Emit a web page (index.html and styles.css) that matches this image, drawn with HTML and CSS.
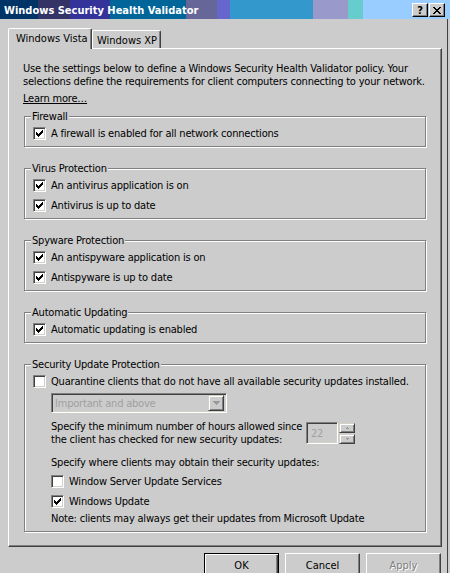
FILE: index.html
```html
<!DOCTYPE html>
<html>
<head>
<meta charset="utf-8">
<title>Windows Security Health Validator</title>
<link rel="stylesheet" href="styles.css">
</head>
<body>
<div class="window">
  <div class="titlebar">
    <span class="title">Windows Security Health Validator</span>
    <div class="tbtns">
      <span class="tbtn help">?</span>
      <span class="tbtn close"><svg width="8" height="7" viewBox="0 0 8 7" shape-rendering="crispEdges"><path d="M0 0h2v1h-2zM6 0h2v1h-2zM1 1h2v1h-2zM5 1h2v1h-2zM2 2h4v1h-4zM3 3h2v1h-2zM2 4h4v1h-4zM1 5h2v1h-2zM5 5h2v1h-2zM0 6h2v1h-2zM6 6h2v1h-2z" fill="#000"/></svg></span>
    </div>
  </div>
  <div class="client">
    <div class="tabs">
      <div class="tab active">Windows Vista</div>
      <div class="tab inactive">Windows XP</div>
    </div>
    <div class="panel">
      <p class="intro">Use the settings below to define a Windows Security Health Validator policy. Your<br>selections define the requirements for client computers connecting to your network.</p>
      <div class="learn"><a>Learn more…</a></div>

      <fieldset class="group">
        <legend>Firewall</legend>
        <div class="row"><span class="cb"><svg width="7" height="7" viewBox="0 0 7 7" shape-rendering="crispEdges"><path d="M6 0h1v3h-1zM5 1h1v3h-1zM4 2h1v3h-1zM3 3h1v3h-1zM2 4h1v3h-1zM1 3h1v3h-1zM0 2h1v3h-1z" fill="#000"/></svg></span><span>A firewall is enabled for all network connections</span></div>
      </fieldset>

      <fieldset class="group">
        <legend>Virus Protection</legend>
        <div class="row"><span class="cb"><svg width="7" height="7" viewBox="0 0 7 7" shape-rendering="crispEdges"><path d="M6 0h1v3h-1zM5 1h1v3h-1zM4 2h1v3h-1zM3 3h1v3h-1zM2 4h1v3h-1zM1 3h1v3h-1zM0 2h1v3h-1z" fill="#000"/></svg></span><span>An antivirus application is on</span></div>
        <div class="row"><span class="cb"><svg width="7" height="7" viewBox="0 0 7 7" shape-rendering="crispEdges"><path d="M6 0h1v3h-1zM5 1h1v3h-1zM4 2h1v3h-1zM3 3h1v3h-1zM2 4h1v3h-1zM1 3h1v3h-1zM0 2h1v3h-1z" fill="#000"/></svg></span><span>Antivirus is up to date</span></div>
      </fieldset>

      <fieldset class="group">
        <legend>Spyware Protection</legend>
        <div class="row"><span class="cb"><svg width="7" height="7" viewBox="0 0 7 7" shape-rendering="crispEdges"><path d="M6 0h1v3h-1zM5 1h1v3h-1zM4 2h1v3h-1zM3 3h1v3h-1zM2 4h1v3h-1zM1 3h1v3h-1zM0 2h1v3h-1z" fill="#000"/></svg></span><span>An antispyware application is on</span></div>
        <div class="row"><span class="cb"><svg width="7" height="7" viewBox="0 0 7 7" shape-rendering="crispEdges"><path d="M6 0h1v3h-1zM5 1h1v3h-1zM4 2h1v3h-1zM3 3h1v3h-1zM2 4h1v3h-1zM1 3h1v3h-1zM0 2h1v3h-1z" fill="#000"/></svg></span><span>Antispyware is up to date</span></div>
      </fieldset>

      <fieldset class="group">
        <legend>Automatic Updating</legend>
        <div class="row"><span class="cb"><svg width="7" height="7" viewBox="0 0 7 7" shape-rendering="crispEdges"><path d="M6 0h1v3h-1zM5 1h1v3h-1zM4 2h1v3h-1zM3 3h1v3h-1zM2 4h1v3h-1zM1 3h1v3h-1zM0 2h1v3h-1z" fill="#000"/></svg></span><span>Automatic updating is enabled</span></div>
      </fieldset>

      <fieldset class="group">
        <legend>Security Update Protection</legend>
        <div class="row"><span class="cb"></span><span>Quarantine clients that do not have all available security updates installed.</span></div>
        <div class="select">
          <span class="sel-text">Important and above</span>
          <span class="arrowbtn"><svg width="7" height="4" viewBox="0 0 7 4" shape-rendering="crispEdges"><path d="M0 0h7v1h-7zM1 1h5v1h-5zM2 2h3v1h-3zM3 3h1v1h-1z" fill="#999"/></svg></span>
        </div>
        <div class="spinrow">
          <div class="spintext">Specify the minimum number of hours allowed since<br>the client has checked for new security updates:</div>
          <div class="spininput">22</div>
          <div class="spinbtns">
            <span class="spinbtn"><svg width="3" height="2" viewBox="0 0 3 2" shape-rendering="crispEdges"><path d="M1 0h1v1h-1zM0 1h3v1h-3z" fill="#999"/></svg></span>
            <span class="spinbtn"><svg width="3" height="2" viewBox="0 0 3 2" shape-rendering="crispEdges"><path d="M0 0h3v1h-3zM1 1h1v1h-1z" fill="#999"/></svg></span>
          </div>
        </div>
        <div class="indent where">Specify where clients may obtain their security updates:</div>
        <div class="row indent first"><span class="cb"></span><span>Window Server Update Services</span></div>
        <div class="row indent"><span class="cb"><svg width="7" height="7" viewBox="0 0 7 7" shape-rendering="crispEdges"><path d="M6 0h1v3h-1zM5 1h1v3h-1zM4 2h1v3h-1zM3 3h1v3h-1zM2 4h1v3h-1zM1 3h1v3h-1zM0 2h1v3h-1z" fill="#000"/></svg></span><span>Windows Update</span></div>
        <div class="indent note">Note: clients may always get their updates from Microsoft Update</div>
      </fieldset>
    </div>
    <div class="buttons">
      <span class="btn default">OK</span>
      <span class="btn">Cancel</span>
      <span class="btn disabled">Apply</span>
    </div>
  </div>
</div>
</body>
</html>
```

FILE: styles.css
```css
* { box-sizing: border-box; }
html, body { margin: 0; padding: 0; }
body {
  width: 450px;
  height: 573px;
  overflow: hidden;
  background: #cccccc;
  font-family: "DejaVu Sans Condensed", "DejaVu Sans", sans-serif;
  font-stretch: condensed;
  font-size: 11px;
  line-height: 13px;
  letter-spacing: -0.2px;
  color: #000;
}
.window { width: 450px; height: 573px; }

.titlebar {
  height: 19px;
  display: flex;
  justify-content: space-between;
  align-items: flex-start;
  padding: 0 5px 0 4px;
  background: linear-gradient(to right,
    #003366 0 38px, #333366 38px 70px, #333399 70px 110px,
    #006699 110px 186px, #666699 186px 217px, #6666cc 217px 230px,
    #3399cc 230px 313px, #9999cc 313px 348px, #66cccc 348px 363px,
    #99ccff 363px 450px);
}
.title {
  color: #fff;
  font-weight: bold;
  line-height: 13px;
  letter-spacing: 0;
  margin-top: 4px;
}
.tbtns { display: flex; gap: 1px; margin-top: 3px; }
.tbtn {
  width: 16px;
  height: 14px;
  background: #cccccc;
  border: 1px solid;
  border-color: #ffffff #000000 #000000 #ffffff;
  box-shadow: inset -1px -1px #808080;
  display: flex;
  align-items: center;
  justify-content: center;
  font-weight: bold;
  font-size: 11px;
  line-height: 11px;
  letter-spacing: 0;
}
.tbtn.help { padding-top: 1px; }

.client {
  width: 448px;
  height: 554px;
  border-right: 1px solid #404040;
  padding: 9px 5px 0 8px;
}

.tabs {
  display: flex;
  align-items: flex-end;
  height: 21px;
  margin-bottom: -1px;
  position: relative;
  z-index: 1;
}
.tab {
  background: #cccccc;
  border-left: 1px solid #ffffff;
  border-top: 1px solid #ffffff;
  border-right: 1px solid #404040;
  box-shadow: inset -1px 0 #808080;
  border-radius: 2px 2px 0 0;
  white-space: nowrap;
  letter-spacing: 0;
}
.tab.active {
  width: 84px;
  height: 21px;
  padding: 3px 0 0 7px;
}
.tab.inactive {
  width: 69px;
  height: 18px;
  margin-bottom: 1px;
  padding: 3px 0 0 4px;
}

.panel {
  height: 499px;
  border-top: 1px solid #ffffff;
  border-left: 1px solid #ffffff;
  border-right: 1px solid #404040;
  border-bottom: 1px solid #404040;
  box-shadow: inset -1px -1px #808080;
  padding: 13px 15px 0 14px;
}
.intro { margin: 0; white-space: nowrap; }
.learn { margin-top: 4px; }
.learn a { text-decoration: underline; color: #000; }

.group {
  margin: 5px 0 0 1px;
  padding: 4px 8px 6px 8px;
  border: 1px solid #808080;
  box-shadow: inset 1px 1px #ffffff, 1px 1px #ffffff;
  min-width: 0;
}
.group + .group { margin-top: 15px; }
.group legend {
  padding: 0 1px;
  margin-left: -2px;
  background: #cccccc;
  line-height: 13px;
}

.row {
  display: flex;
  align-items: center;
  gap: 5px;
  height: 13px;
  white-space: nowrap;
}
.row + .row { margin-top: 7px; }
.cb {
  flex: none;
  width: 13px;
  height: 13px;
  background: #ffffff;
  border: 1px solid;
  border-color: #808080 #ffffff #ffffff #808080;
  box-shadow: inset 1px 1px #404040, inset -1px -1px #d4d0c8;
  display: flex;
  align-items: center;
  justify-content: center;
}
.cb svg { display: block; }

.indent { margin-left: 18px; }

.select {
  margin: 5px 0 0 18px;
  width: 176px;
  height: 20px;
  border: 1px solid;
  border-color: #808080 #ffffff #ffffff #808080;
  box-shadow: inset 1px 1px #404040, inset -1px -1px #d4d0c8;
  display: flex;
  align-items: center;
  padding: 2px;
  color: #a0a0a0;
}
.sel-text { flex: 1; padding-left: 1px; white-space: nowrap; }
.arrowbtn {
  width: 16px;
  height: 16px;
  background: #cccccc;
  border: 1px solid;
  border-color: #d4d0c8 #404040 #404040 #d4d0c8;
  box-shadow: inset 1px 1px #ffffff, inset -1px -1px #808080;
  display: flex;
  align-items: center;
  justify-content: center;
}

.spinrow {
  margin: 7px 0 0 18px;
  display: flex;
  align-items: center;
}
.spintext { width: 255px; white-space: nowrap; }
.spininput {
  width: 32px;
  height: 22px;
  border: 1px solid;
  border-color: #808080 #ffffff #ffffff #808080;
  box-shadow: inset 1px 1px #404040, inset -1px -1px #d4d0c8;
  color: #a0a0a0;
  padding: 4px 0 0 4px;
}
.spinbtns {
  display: flex;
  flex-direction: column;
  gap: 1px;
  margin-left: 1px;
}
.spinbtn {
  width: 16px;
  height: 10px;
  background: #cccccc;
  border: 1px solid;
  border-color: #d4d0c8 #404040 #404040 #d4d0c8;
  box-shadow: inset 1px 1px #ffffff, inset -1px -1px #808080;
  display: flex;
  align-items: center;
  justify-content: center;
}
.spinbtn svg { display: block; }

.where { margin-top: 10px; white-space: nowrap; }
.row.first { margin-top: 6px; }
.note { margin-top: 4px; white-space: nowrap; }

.buttons {
  display: flex;
  justify-content: flex-end;
  gap: 6px;
  margin-top: 6px;
  padding-right: 1px;
}
.btn {
  width: 75px;
  height: 23px;
  border: 1px solid;
  border-color: #ffffff #404040 #404040 #ffffff;
  box-shadow: inset -1px -1px #808080;
  display: flex;
  align-items: center;
  justify-content: center;
  padding-top: 1px;
  letter-spacing: 0;
}
.btn.default {
  border: 1px solid #000000;
  box-shadow: inset 1px 1px #ffffff, inset -1px -1px #404040, inset -2px -2px #808080;
}
.btn.disabled {
  color: #808080;
  text-shadow: 1px 1px #ffffff;
}
```
